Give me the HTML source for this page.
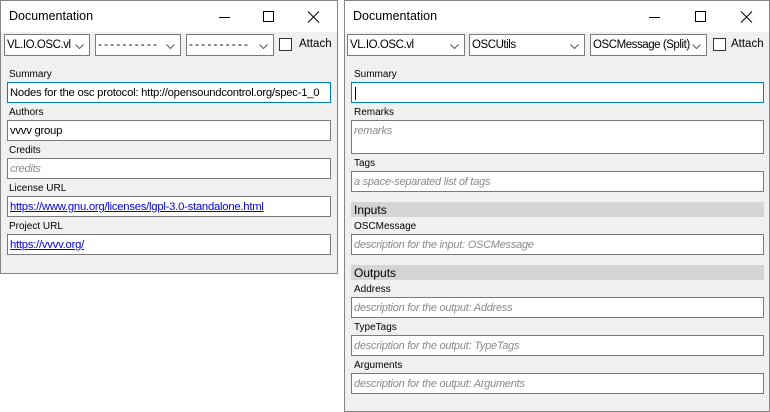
<!DOCTYPE html><html><head><style>
*{margin:0;padding:0;box-sizing:border-box}
body{width:770px;height:412px;background:#fff;position:relative;overflow:hidden;font-family:"Liberation Sans",sans-serif;color:#000}
.win{position:absolute;background:#f0f0f0;border:1px solid #858585}
.tb{position:absolute;left:0;top:0;right:0;height:31px;background:#fff}
.tt{position:absolute;left:8px;top:8px;font-size:12.5px}
.a{position:absolute}
.cb{position:absolute;height:22px;background:#fff;border:1px solid #7a7a7a;font-size:11.5px;letter-spacing:-0.45px;padding:4px 0 0 2px;white-space:nowrap}
.cb span{display:block;overflow:hidden;margin-right:15px}
.cb svg{position:absolute;right:5px;top:9px}
.chk{position:absolute;width:13px;height:13px;border:1px solid #333;background:#fff}
.lb{position:absolute;font-size:10px}
.in{position:absolute;height:21px;background:#fff;border:1px solid #7a7a7a;font-size:11.3px;letter-spacing:-0.25px;padding:4px 0 0 2px;white-space:nowrap;overflow:hidden}
.ph{color:#8a8a8a;font-style:italic;font-size:11px}
.hd{position:absolute;background:#d4d4d4;font-size:12px;padding:1px 0 0 3px;height:15px}
a{color:#0000ee;text-decoration:underline}
</style></head><body>
<svg width="0" height="0" style="position:absolute"><defs><symbol id="ch" viewBox="0 0 9 5"><path d="M0.5 0.5L4.5 4.5L8.5 0.5" fill="none" stroke="#555" stroke-width="1"/></symbol></defs></svg>

<div class="win" style="left:0;top:0;width:338px;height:274px">
<div class="tb"><div class="tt">Documentation</div>
<svg class="a" style="left:215px;top:10px" width="110" height="12"><path d="M3 6.5H14" stroke="#000"/><rect x="47.5" y="0.5" width="10" height="10" fill="none" stroke="#000"/><path d="M92 0.5L103 11.5M103 0.5L92 11.5" stroke="#000"/></svg></div>
<div class="cb" style="left:3px;top:33px;width:86px"><span>VL.IO.OSC.vl</span><svg width="9" height="5"><use href="#ch"/></svg></div>
<div class="cb" style="left:94px;top:33px;width:86px"><span>- - - - - - - - - -</span><svg width="9" height="5"><use href="#ch"/></svg></div>
<div class="cb" style="left:185px;top:33px;width:88px"><span>- - - - - - - - - -</span><svg width="9" height="5"><use href="#ch"/></svg></div>
<div class="chk" style="left:278px;top:37px"></div><div class="a" style="left:298px;top:37px;font-size:11.5px">Attach</div>
<div class="lb" style="left:8px;top:68px">Summary</div>
<div class="in" style="left:6px;top:81px;width:324px;border-color:#0078d7">Nodes for the osc protocol: http://opensoundcontrol.org/spec-1_0</div>
<div class="lb" style="left:8px;top:106px">Authors</div>
<div class="in" style="left:6px;top:119px;width:324px">vvvv group</div>
<div class="lb" style="left:8px;top:144px">Credits</div>
<div class="in" style="left:6px;top:157px;width:324px"><span class="ph">credits</span></div>
<div class="lb" style="left:8px;top:182px">License URL</div>
<div class="in" style="left:6px;top:195px;width:324px"><a>https://www.gnu.org/licenses/lgpl-3.0-standalone.html</a></div>
<div class="lb" style="left:8px;top:220px">Project URL</div>
<div class="in" style="left:6px;top:233px;width:324px"><a>https://vvvv.org/</a></div>
</div>

<div class="win" style="left:344px;top:0;width:426px;height:412px">
<div class="tb"><div class="tt">Documentation</div>
<svg class="a" style="left:300px;top:10px" width="115" height="12"><path d="M4 6.5H15" stroke="#000"/><rect x="50.5" y="0.5" width="10" height="10" fill="none" stroke="#000"/><path d="M96 0.5L107 11.5M107 0.5L96 11.5" stroke="#000"/></svg></div>
<div class="cb" style="left:2px;top:33px;width:118px"><span>VL.IO.OSC.vl</span><svg width="9" height="5"><use href="#ch"/></svg></div>
<div class="cb" style="left:124px;top:33px;width:116px"><span>OSCUtils</span><svg width="9" height="5"><use href="#ch"/></svg></div>
<div class="cb" style="left:245px;top:33px;width:117px"><span>OSCMessage (Split)</span><svg width="9" height="5"><use href="#ch"/></svg></div>
<div class="chk" style="left:368px;top:37px"></div><div class="a" style="left:386px;top:37px;font-size:11.5px">Attach</div>
<div class="lb" style="left:9px;top:68px">Summary</div>
<div class="in" style="left:6px;top:81px;width:413px;border-color:#0078d7"><span style="display:inline-block;width:1px;height:13px;background:#000;margin-left:1px"></span></div>
<div class="lb" style="left:9px;top:106px">Remarks</div>
<div class="in" style="left:6px;top:119px;width:413px;height:34px"><span class="ph">remarks</span></div>
<div class="lb" style="left:9px;top:157px">Tags</div>
<div class="in" style="left:6px;top:170px;width:413px"><span class="ph">a space-separated list of tags</span></div>
<div class="hd" style="left:6px;top:201px;width:413px">Inputs</div>
<div class="lb" style="left:9px;top:220px">OSCMessage</div>
<div class="in" style="left:6px;top:233px;width:413px"><span class="ph">description for the input: OSCMessage</span></div>
<div class="hd" style="left:6px;top:264px;width:413px">Outputs</div>
<div class="lb" style="left:9px;top:283px">Address</div>
<div class="in" style="left:6px;top:296px;width:413px"><span class="ph">description for the output: Address</span></div>
<div class="lb" style="left:9px;top:321px">TypeTags</div>
<div class="in" style="left:6px;top:334px;width:413px"><span class="ph">description for the output: TypeTags</span></div>
<div class="lb" style="left:9px;top:359px">Arguments</div>
<div class="in" style="left:6px;top:372px;width:413px"><span class="ph">description for the output: Arguments</span></div>
</div>
</body></html>
